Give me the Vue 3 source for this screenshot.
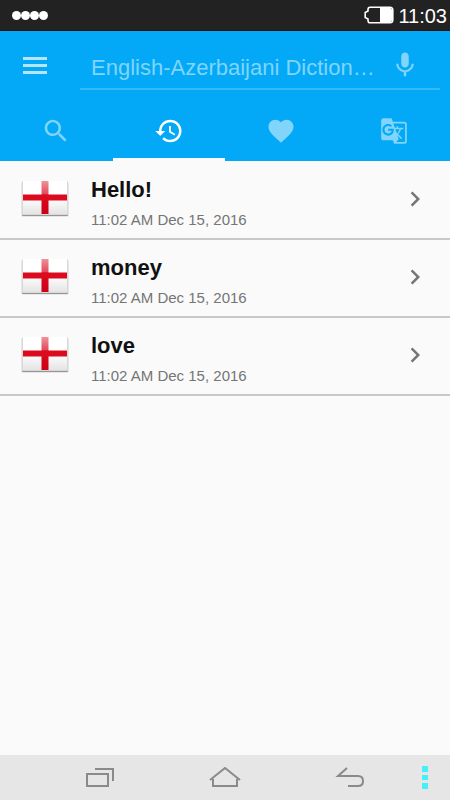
<template>
  <div class="screen">
    <div class="status-bar">
      <div class="signal">
        <span v-for="n in 4" :key="n" class="dot"></span>
      </div>
      <div class="status-right">
        <svg class="battery" width="30" height="18" viewBox="0 0 30 18" aria-hidden="true">
          <path d="M6 1.2H26Q28.8 1.2 28.8 4V14Q28.8 16.8 26 16.8H6Q4 16.8 4 14.5V13L1.2 11.5V6.5L4 5V3.5Q4 1.2 6 1.2Z" fill="#222" stroke="#fff" stroke-width="1.6" />
          <path d="M16 2H26Q28 2 28 4V14Q28 16 26 16H16Z" fill="#fff" />
        </svg>
        <span class="time">11:03</span>
      </div>
    </div>

    <header class="header">
      <div class="search-bar">
        <button class="icon-btn menu-btn" aria-label="Menu">
          <svg width="24" height="18" viewBox="0 0 24 18">
            <path d="M0 0H24V3H0ZM0 7H24V10H0ZM0 14H24V17H0Z" fill="currentColor" />
          </svg>
        </button>
        <div class="search-field">
          <input v-model="query" type="text" placeholder="English-Azerbaijani Diction…" aria-label="Search word" />
          <button class="icon-btn mic-btn" aria-label="Voice input">
            <svg width="30" height="30" viewBox="0 0 24 24">
              <path fill="currentColor" d="M12 14c1.66 0 2.99-1.34 2.99-3L15 5c0-1.66-1.34-3-3-3S9 3.34 9 5v6c0 1.66 1.34 3 3 3zm5.3-3c0 3-2.54 5.1-5.3 5.1S6.7 14 6.7 11H5c0 3.41 2.72 6.23 6 6.72V21h2v-3.28c3.28-.48 6-3.3 6-6.72h-1.7z" />
            </svg>
          </button>
        </div>
      </div>

      <nav class="tabs">
        <button
          v-for="tab in tabs"
          :key="tab.id"
          class="tab"
          :class="{ active: tab.id === activeTab }"
          :aria-label="tab.label"
          @click="activeTab = tab.id"
        >
          <svg :width="tab.size" :height="tab.size" viewBox="0 0 24 24">
            <path :d="tab.icon" fill="currentColor" />
          </svg>
        </button>
      </nav>
    </header>

    <main class="content">
      <ul class="history">
        <li v-for="item in history" :key="item.word">
          <a href="#" class="row">
            <svg class="flag" width="50" height="38" viewBox="0 0 50 38" aria-hidden="true">
              <defs>
                <linearGradient id="cloth" x1="0" y1="0" x2="0" y2="1">
                  <stop offset="0.5" stop-color="#fff" />
                  <stop offset="1" stop-color="#e4e4e4" />
                </linearGradient>
                <linearGradient id="cross" x1="0" y1="0" x2="0" y2="1">
                  <stop offset="0" stop-color="#ee929a" />
                  <stop offset="0.4" stop-color="#e2485a" />
                  <stop offset="0.42" stop-color="#dd0a20" />
                  <stop offset="1" stop-color="#cc0014" />
                </linearGradient>
              </defs>
              <rect x="1" y="2" width="48" height="35" rx="2" fill="#000" opacity="0.08" />
              <rect x="2" y="3" width="46" height="33" rx="1" fill="#000" opacity="0.35" />
              <rect x="2" y="1" width="46" height="34" rx="1" fill="#d8d8d8" />
              <rect x="3" y="1" width="44" height="33" fill="url(#cloth)" />
              <rect x="21.5" y="1" width="7" height="33" fill="url(#cross)" />
              <rect x="3" y="14.5" width="44" height="6" fill="#dc0a1e" />
            </svg>
            <span class="texts">
              <span class="word">{{ item.word }}</span>
              <span class="date">{{ item.date }}</span>
            </span>
            <svg class="chevron" width="30" height="30" viewBox="0 0 24 24" aria-hidden="true">
              <path fill="currentColor" d="M10 6L8.59 7.41 13.17 12l-4.58 4.59L10 18l6-6z" />
            </svg>
          </a>
        </li>
      </ul>
    </main>

    <footer class="nav-bar">
      <button class="nav-btn" aria-label="Recent apps">
        <svg width="30" height="22" viewBox="0 0 30 22">
          <path d="M2 7H23V19H2ZM10 2H28V14" fill="none" stroke="#8a8a8a" stroke-width="2" />
        </svg>
      </button>
      <button class="nav-btn" aria-label="Home">
        <svg width="34" height="22" viewBox="0 0 34 22">
          <path d="M2 13L17 1L32 13M5 12V19H29V12" fill="none" stroke="#8a8a8a" stroke-width="2" />
        </svg>
      </button>
      <button class="nav-btn" aria-label="Back">
        <svg width="30" height="22" viewBox="0 0 30 22">
          <path d="M12 1L3 9H23Q28 9 28 14Q28 19 23 19H13" fill="none" stroke="#8a8a8a" stroke-width="2" />
        </svg>
      </button>
      <button class="more-btn" aria-label="More options">
        <svg width="6" height="23" viewBox="0 0 6 23">
          <path d="M0 0H6V6H0ZM0 9H6V14H0ZM0 17H6V23H0Z" fill="#45f0fb" />
        </svg>
      </button>
    </footer>
  </div>
</template>

<script setup>
import { ref } from 'vue'

const query = ref('')
const activeTab = ref('history')

const tabs = [
  {
    id: 'search',
    label: 'Search',
    size: 30,
    icon: 'M15.5 14h-.79l-.28-.27C15.41 12.59 16 11.11 16 9.5 16 5.91 13.09 3 9.5 3S3 5.91 3 9.5 5.91 16 9.5 16c1.61 0 3.09-.59 4.23-1.57l.27.28v.79l5 4.99L20.49 19l-4.99-5zm-6 0C7.01 14 5 11.99 5 9.5S7.01 5 9.5 5 14 7.01 14 9.5 11.99 14 9.5 14z'
  },
  {
    id: 'history',
    label: 'History',
    size: 30,
    icon: 'M13 3a9 9 0 0 0-9 9H1l3.89 3.89.07.14L9 12H6c0-3.87 3.13-7 7-7s7 3.13 7 7-3.13 7-7 7c-1.93 0-3.68-.79-4.94-2.06l-1.42 1.42A8.954 8.954 0 0 0 13 21a9 9 0 0 0 0-18zm-1 5v5l4.28 2.54.72-1.21-3.5-2.08V8H12z'
  },
  {
    id: 'favorites',
    label: 'Favorites',
    size: 30,
    icon: 'M12 21.35l-1.45-1.32C5.4 15.36 2 12.28 2 8.5 2 5.42 4.42 3 7.5 3c1.74 0 3.41.81 4.5 2.09C13.09 3.81 14.76 3 16.5 3 19.58 3 22 5.42 22 8.5c0 3.78-3.4 6.86-8.55 11.54L12 21.35z'
  },
  {
    id: 'translate',
    label: 'Translate',
    size: 28,
    icon: 'M21 4H11l-1-3H3c-1.1 0-2 .9-2 2v15c0 1.1.9 2 2 2h8l1 3h9c1.1 0 2-.9 2-2V6c0-1.1-.9-2-2-2zM7 16c-2.76 0-5-2.24-5-5s2.24-5 5-5c1.35 0 2.48.5 3.35 1.3L9.03 8.57c-.38-.36-1.04-.78-2.03-.78-1.74 0-3.15 1.44-3.15 3.21S5.26 14.21 7 14.21c2.01 0 2.84-1.44 2.92-2.41H7v-1.71h4.68c.07.31.12.61.12 1.02C11.8 13.97 9.89 16 7 16zm6.17-5.42h3.7c-.43 1.25-1.11 2.43-2.05 3.47-.31-.35-.6-.72-.86-1.1l-.79-2.37zm8.33 9.92c0 .55-.45 1-1 1H14l2-2.5-1.04-3.1 3.1 3.1.92-.92-3.3-3.25.02-.02c1.13-1.25 1.93-2.69 2.4-4.22H20v-1.3h-4.53V8h-1.29v1.29h-1.44L11.46 5.5h9.04c.55 0 1 .45 1 1v14z'
  }
]

const history = [
  { word: 'Hello!', date: '11:02 AM Dec 15, 2016' },
  { word: 'money', date: '11:02 AM Dec 15, 2016' },
  { word: 'love', date: '11:02 AM Dec 15, 2016' }
]
</script>

<style>
body {
  background: #fafafa;
}
</style>

<style scoped>
.screen {
  display: flex;
  flex-direction: column;
  min-height: 100vh;
  background: #fafafa;
  font-family: "Liberation Sans", Arial, sans-serif;
}
button {
  padding: 0;
  border: none;
  background: none;
  cursor: pointer;
}
svg {
  display: block;
}
.status-bar {
  display: flex;
  align-items: center;
  justify-content: space-between;
  box-sizing: border-box;
  height: 31px;
  padding: 0 3px 0 12px;
  background: #222;
  border-bottom: 1px solid #2b1210;
  color: #fff;
}
.signal {
  display: flex;
}
.dot {
  width: 9px;
  height: 9px;
  border-radius: 50%;
  background: #fff;
}
.status-right {
  display: flex;
  align-items: center;
  gap: 4px;
}
.time {
  padding-top: 2px;
  font-size: 20px;
  line-height: 26px;
}
.header {
  background: #03a9f6;
}
.search-bar {
  display: flex;
  align-items: center;
  height: 70px;
  padding: 0 10px 0 23px;
}
.icon-btn {
  color: #fff;
}
.menu-btn {
  margin-right: 33px;
  opacity: .7;
}
.search-field {
  flex: 1;
  display: flex;
  align-items: center;
  min-width: 0;
  height: 46px;
  border-bottom: 2px solid #35baf8;
}
.search-field input {
  flex: 1;
  min-width: 0;
  padding: 6px 0 0 11px;
  border: none;
  outline: none;
  background: none;
  color: #fff;
  font-family: inherit;
  font-size: 22px;
}
.search-field input::placeholder {
  color: #81d4fa;
  opacity: 1;
}
.mic-btn {
  margin-right: 20px;
  color: #81d4fa;
}
.tabs {
  display: flex;
  height: 60px;
}
.tab {
  flex: 1;
  display: flex;
  align-items: center;
  justify-content: center;
  color: #81d4fa;
  border-top: 3px solid transparent;
  border-bottom: 3px solid transparent;
}
.tab.active {
  color: #fff;
  border-bottom-color: #fafafa;
}
.content {
  flex: 1;
}
.history {
  margin: 0;
  padding: 1px 0 0;
  list-style: none;
}
.row {
  display: flex;
  align-items: center;
  box-sizing: border-box;
  height: 78px;
  padding: 0 20px 2px;
  border-bottom: 2px solid #c8c8c8;
  text-decoration: none;
}
.texts {
  flex: 1;
  display: flex;
  flex-direction: column;
  gap: 7px;
  margin-left: 21px;
  padding-top: 9px;
}
.word {
  color: #111;
  font-size: 22px;
  font-weight: bold;
  line-height: 26px;
}
.date {
  color: #757575;
  font-size: 15px;
  line-height: 20px;
}
.chevron {
  color: #757575;
}
.nav-bar {
  display: flex;
  align-items: center;
  height: 45px;
  padding: 0 13px 0 37px;
  background: #e6e6e6;
}
.nav-btn {
  flex: 5;
  display: flex;
  justify-content: center;
}
.more-btn {
  flex: 1;
  display: flex;
  justify-content: center;
}
</style>
